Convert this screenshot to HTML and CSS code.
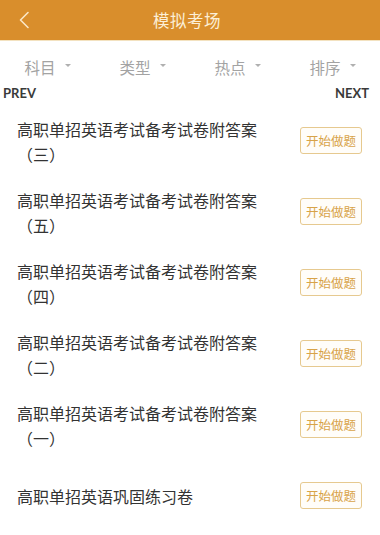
FILE: index.html
```html
<!DOCTYPE html>
<html lang="zh">
<head>
<meta charset="utf-8">
<title>模拟考场</title>
<link rel="stylesheet" href="styles.css">
</head>
<body>
<header class="topbar">
  <span class="back">
    <svg width="12" height="18" viewBox="0 0 12 18"><path d="M10 1.5 L2.5 9 L10 16.5" fill="none" stroke="#fbe7c6" stroke-width="1.6" stroke-linecap="round" stroke-linejoin="round"/></svg>
  </span>
  <h1 class="title">模拟考场</h1>
</header>
<nav class="filters">
  <div class="filter"><span>科目</span><i class="caret"></i></div>
  <div class="filter"><span>类型</span><i class="caret"></i></div>
  <div class="filter"><span>热点</span><i class="caret"></i></div>
  <div class="filter"><span>排序</span><i class="caret"></i></div>
</nav>
<div class="pager"><span>PREV</span><span>NEXT</span></div>
<ul class="list">
  <li class="item"><p class="name">高职单招英语考试备考试卷附答案（三）</p><button class="start">开始做题</button></li>
  <li class="item"><p class="name">高职单招英语考试备考试卷附答案（五）</p><button class="start">开始做题</button></li>
  <li class="item"><p class="name">高职单招英语考试备考试卷附答案（四）</p><button class="start">开始做题</button></li>
  <li class="item"><p class="name">高职单招英语考试备考试卷附答案（二）</p><button class="start">开始做题</button></li>
  <li class="item"><p class="name">高职单招英语考试备考试卷附答案（一）</p><button class="start">开始做题</button></li>
  <li class="item"><p class="name">高职单招英语巩固练习卷</p><button class="start">开始做题</button></li>
</ul>
</body>
</html>
```
FILE: styles.css
```css
* { box-sizing: border-box; }
html, body { margin: 0; padding: 0; background: #fff; }
body {
  width: 380px;
  height: 535px;
  overflow: hidden;
  font-family: "Noto Sans CJK SC", "Noto Sans", sans-serif;
  color: #333;
}
.topbar {
  height: 41px;
  background: #d98e2c;
  display: flex;
  align-items: center;
  justify-content: center;
  position: relative;
  border-bottom: 1px solid #f3e2c0;
  padding-right: 6px;
}
.back {
  position: absolute;
  left: 18px;
  top: 11px;
  display: flex;
}
.title {
  margin: 0;
  font-size: 16.5px;
  font-weight: 400;
  color: #fcefd6;
  letter-spacing: 0.5px;
}
.filters {
  display: grid;
  grid-template-columns: repeat(4, 1fr);
  height: 44px;
  padding-top: 15px;
}
.filter {
  display: flex;
  align-items: center;
  justify-content: center;
  gap: 9px;
  color: #a3a3a3;
  font-size: 15.5px;
  height: 22px;
}
.caret {
  width: 0;
  height: 0;
  border-left: 3px solid transparent;
  border-right: 3px solid transparent;
  border-top: 3px solid #b0b0b0;
  margin-top: -3px;
}
.pager {
  display: flex;
  justify-content: space-between;
  padding: 0 11px 0 3px;
  font-family: "Lato", "Open Sans", sans-serif;
  font-size: 13px;
  font-weight: 700;
  color: #3a3a3a;
  height: 21px;
  line-height: 16px;
}
.list {
  list-style: none;
  margin: 0;
  padding: 0;
}
.item {
  height: 71px;
  display: flex;
  align-items: center;
  justify-content: space-between;
  padding: 0 18px 0 17px;
}
.name {
  margin: 0;
  width: 248px;
  font-size: 16px;
  line-height: 25px;
  color: #333;
}
.start {
  width: 62px;
  height: 27px;
  border: 1px solid #e6c98f;
  border-radius: 3px;
  background: #fffdf9;
  color: #d8a348;
  font-family: "Noto Sans CJK SC", sans-serif;
  font-size: 12.5px;
  padding: 0;
  margin-top: -2px;
}
```
